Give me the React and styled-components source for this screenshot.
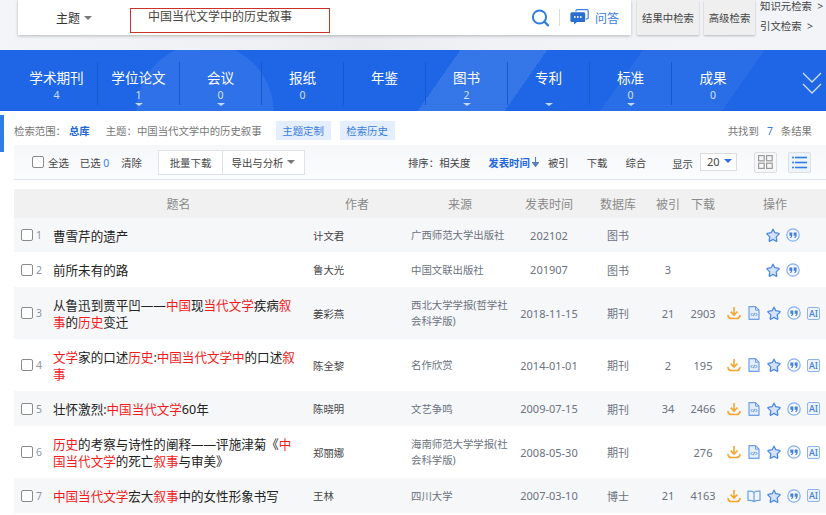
import React from "react";
import styled, { createGlobalStyle } from "styled-components";

const tabs = [
    { name: "学术期刊", count: "4" },
    { name: "学位论文", count: "1", more: true },
    { name: "会议", count: "0", more: true },
    { name: "报纸", count: "0" },
    { name: "年鉴", count: "" },
    { name: "图书", count: "2", more: true },
    { name: "专利", count: "", more: true },
    { name: "标准", count: "0", more: true },
    { name: "成果", count: "0" },
];

// title parts: strings are plain, [string] is a highlighted hit
const rows = [
    { h: 34, title: ["曹雪芹的遗产"], author: "计文君", source: "广西师范大学出版社", date: "202102", db: "图书", cited: "", down: "", icons: false },
    { h: 35, title: ["前所未有的路"], author: "鲁大光", source: "中国文联出版社", date: "201907", db: "图书", cited: "3", down: "", icons: false },
    { h: 52, title: ["从鲁迅到贾平凹——", ["中国"], "现", ["当代文学"], "疾病", ["叙"], ["事"], "的", ["历史"], "变迁"], author: "姜彩燕", source: "西北大学学报(哲学社会科学版)", date: "2018-11-15", db: "期刊", cited: "21", down: "2903", icons: "doc" },
    { h: 52, title: [["文学"], "家的口述", ["历史"], ":", ["中国当代文学中"], "的口述", ["叙"], ["事"]], author: "陈全黎", source: "名作欣赏", date: "2014-01-01", db: "期刊", cited: "2", down: "195", icons: "doc" },
    { h: 35, title: ["壮怀激烈:", ["中国当代文学"], "60年"], author: "陈晓明", source: "文艺争鸣", date: "2009-07-15", db: "期刊", cited: "34", down: "2466", icons: "doc" },
    { h: 52, title: [["历史"], "的考察与诗性的阐释——评施津菊《", ["中"], ["国当代文学"], "的死亡", ["叙事"], "与审美》"], author: "郑丽娜", source: "海南师范大学学报(社会科学版)", date: "2008-05-30", db: "期刊", cited: "", down: "276", icons: "doc" },
    { h: 35, title: [["中国当代文学"], "宏大", ["叙事"], "中的女性形象书写"], author: "王林", source: "四川大学", date: "2007-03-10", db: "博士", cited: "21", down: "4163", icons: "book" },
];

export default function App() {
    return (
        <Page>
            <GlobalStyle />
            <TopArea>
                <SearchCard>
                    <FieldSelect>
                        主题
                        <Caret $color="#777" />
                    </FieldSelect>
                    <QueryBox>中国当代文学中的历史叙事</QueryBox>
                    <SearchIcon />
                    <CardDivider />
                    <ChatIcon />
                    <AskLabel>问答</AskLabel>
                </SearchCard>
                <GreyButton $w={62} $ml={6}>结果中检索</GreyButton>
                <GreyButton $w={51} $ml={5}>高级检索</GreyButton>
                <SideLinks>
                    <span>知识元检索 &nbsp;&gt;</span>
                    <span>引文检索 &nbsp;&gt;</span>
                </SideLinks>
            </TopArea>

            <TabBand>
                {tabs.map((t, i) => (
                    <Tab key={t.name} $last={i === tabs.length - 1}>
                        <TabName>{t.name}</TabName>
                        <TabCount>{t.count}</TabCount>
                        {t.more && <TabCaret />}
                    </Tab>
                ))}
                <Chevrons />
            </TabBand>

            <SideTick />

            <ScopeRow>
                <ScopeText>检索范围：</ScopeText>
                <ScopeLib>总库</ScopeLib>
                <ScopeText>主题：中国当代文学中的历史叙事</ScopeText>
                <ScopeTag $ml={14}>主题定制</ScopeTag>
                <ScopeTag $ml={9}>检索历史</ScopeTag>
                <Found>
                    共找到<FoundNum>7</FoundNum>条结果
                </Found>
            </ScopeRow>

            <Toolbar>
                <Check $ml={18} />
                <ToolText $ml={4}>全选</ToolText>
                <ToolText $ml={11}>
                    已选 <BlueNum>0</BlueNum>
                </ToolText>
                <ToolText $ml={12}>清除</ToolText>
                <ToolButton $ml={16} $w={65}>批量下载</ToolButton>
                <ToolButton $ml={-1} $w={83}>
                    导出与分析
                    <Caret $color="#777" />
                </ToolButton>
                <ToolSpacer />
                <ToolText>排序：</ToolText>
                <ToolText>相关度</ToolText>
                <ActiveSort>
                    发表时间
                    <SortArrow />
                </ActiveSort>
                <ToolText $ml={9}>被引</ToolText>
                <ToolText $ml={18}>下载</ToolText>
                <ToolText $ml={18}>综合</ToolText>
                <ToolText $ml={26} $dy={2}>显示</ToolText>
                <PageSize>
                    20
                    <Caret $color="#2a6fdb" />
                </PageSize>
                <ViewButton $ml={17}>
                    <GridIcon />
                </ViewButton>
                <ViewButton $ml={11} $active>
                    <ListIcon />
                </ViewButton>
            </Toolbar>

            <Table>
                <HeadRow>
                    <HeadCell $span={2} $pl={30}>题名</HeadCell>
                    <HeadCell $pr={10}>作者</HeadCell>
                    <HeadCell $pr={7}>来源</HeadCell>
                    <HeadCell>发表时间</HeadCell>
                    <HeadCell>数据库</HeadCell>
                    <HeadCell>被引</HeadCell>
                    <HeadCell>下载</HeadCell>
                    <HeadCell>操作</HeadCell>
                </HeadRow>
                {rows.map((r, i) => (
                    <Row key={i} $h={r.h} $odd={i % 2 === 0}>
                        <SelectCell>
                            <Check />
                            <RowNum>{i + 1}</RowNum>
                        </SelectCell>
                        <TitleCell>
                            {r.title.map((p, j) =>
                                Array.isArray(p) ? <Hit key={j}>{p[0]}</Hit> : <span key={j}>{p}</span>
                            )}
                        </TitleCell>
                        <TextCell>{r.author}</TextCell>
                        <SourceCell>{r.source}</SourceCell>
                        <NumCell>{r.date}</NumCell>
                        <NumCell>{r.db}</NumCell>
                        <NumCell>{r.cited}</NumCell>
                        <NumCell>{r.down}</NumCell>
                        <OpsCell>
                            {r.icons ? (
                                <>
                                    <DownloadIcon />
                                    {r.icons === "doc" ? <DocIcon /> : <BookIcon />}
                                </>
                            ) : null}
                            <StarIcon />
                            <QuoteIcon />
                            {r.icons ? <AiIcon /> : <IconGap />}
                        </OpsCell>
                    </Row>
                ))}
            </Table>
        </Page>
    );
}

function SearchIcon() {
    return (
        <TopSvg width="19" height="18" viewBox="0 0 19 18" $ml={201}>
            <circle cx="8.5" cy="8" r="6.6" fill="none" stroke="#2f7de1" strokeWidth="2" />
            <path d="M13.4 12.8l3.6 3.6" stroke="#2f7de1" strokeWidth="2.2" strokeLinecap="round" />
        </TopSvg>
    );
}

function ChatIcon() {
    return (
        <TopSvg width="19" height="17" viewBox="0 0 19 17" $ml={10}>
            <path d="M6 2.5V1.6C6 1 6.5.6 7 .6h10c.6 0 1.2.5 1.2 1.1v7c0 .6-.5 1.1-1.2 1.1h-1" fill="none" stroke="#3f82e4" strokeWidth="1.2" />
            <path d="M2 3.2h11.6c.9 0 1.6.7 1.6 1.6v6.6c0 .9-.7 1.600-1.600 1.600H7l-3 2.600v-2.600H2c-.9 0-1.600-.7-1.600-1.600V4.800c0-.9.7-1.600 1.600-1.600z" fill="#2a6fd0" />
            <circle cx="4.800" cy="8" r=".9" fill="#fff" />
            <circle cx="7.800" cy="8" r=".9" fill="#fff" />
            <circle cx="10.800" cy="8" r=".9" fill="#fff" />
        </TopSvg>
    );
}

function Chevrons() {
    return (
        <ChevronSvg width="20" height="22" viewBox="0 0 20 22">
            <path d="M1 1l9 9 9-9M1 12l9 9 9-9" fill="none" stroke="#cfe0fb" strokeWidth="1.3" />
        </ChevronSvg>
    );
}

function GridIcon() {
    return (
        <svg width="15" height="14" viewBox="0 0 15 14">
            <g fill="none" stroke="#9a9a9a" strokeWidth="1.2">
                <rect x=".6" y=".6" width="5.600" height="5.200" />
                <rect x="8.600" y=".6" width="5.600" height="5.200" />
                <rect x=".6" y="8.200" width="5.600" height="5.200" />
                <rect x="8.600" y="8.200" width="5.600" height="5.200" />
            </g>
        </svg>
    );
}

function ListIcon() {
    return (
        <svg width="15" height="13" viewBox="0 0 15 13">
            <g fill="#2f7de1">
                <circle cx="1" cy="1.500" r="1" />
                <circle cx="1" cy="6.500" r="1" />
                <circle cx="1" cy="11.500" r="1" />
                <rect x="3" y=".7" width="12" height="1.600" />
                <rect x="3" y="5.700" width="12" height="1.600" />
                <rect x="3" y="10.700" width="12" height="1.600" />
            </g>
        </svg>
    );
}

function SortArrow() {
    return (
        <SortSvg width="7" height="10" viewBox="0 0 7 10">
            <path d="M3.500 0v6M.5 5.500h6L3.500 9.500z" stroke="#5a7fb5" strokeWidth="1.100" fill="#5a7fb5" />
        </SortSvg>
    );
}

function DownloadIcon() {
    return (
        <OpSvg viewBox="0 0 14 14">
            <path d="M7 1v7.500M3.600 5.600L7 9l3.400-3.400" fill="none" stroke="#f7a531" strokeWidth="1.600" />
            <path d="M1 9.500c.4 2 1.300 3 3 3h6c1.700 0 2.600-1 3-3" fill="none" stroke="#f7a531" strokeWidth="1.600" strokeLinecap="round" />
        </OpSvg>
    );
}

function DocIcon() {
    return (
        <OpSvg viewBox="0 0 14 14">
            <path d="M2 .7h6.500L12 4.200v9.100H2z" fill="#e3edfc" stroke="#6d9fe8" strokeWidth="1.200" strokeLinejoin="round" />
            <path d="M8.500.7v3.500H12" fill="none" stroke="#6d9fe8" strokeWidth="1" />
            <path d="M5.400 7L4 8.500 5.400 10M8.600 7L10 8.500 8.600 10M7.500 6.800L6.500 10.200" fill="none" stroke="#4c87e0" strokeWidth=".9" />
        </OpSvg>
    );
}

function BookIcon() {
    return (
        <OpSvg viewBox="0 0 14 14">
            <path d="M7 3.400C5.800 2.400 3.500 2 1 2.200v9.300c2.500-.2 4.800.2 6 1.200 1.200-1 3.500-1.400 6-1.200V2.200C10.500 2 8.200 2.400 7 3.400zM7 3.400v9.300" fill="#f1f6fe" stroke="#6d9fe8" strokeWidth="1.200" strokeLinejoin="round" />
        </OpSvg>
    );
}

function StarIcon() {
    return (
        <OpSvg viewBox="0 0 14 14">
            <path d="M7 1.200l1.800 3.500 3.900.6c.4.1.5.5.3.8L10.200 8.900l.6 3.800c.1.400-.3.600-.6.500L7 11.400l-3.200 1.800c-.3.100-.7-.1-.6-.5l.6-3.800L1 6.100c-.2-.3-.1-.7.3-.8l3.900-.6z" fill="#d5e3f8" stroke="#4c87e0" strokeWidth="1.300" strokeLinejoin="round" />
        </OpSvg>
    );
}

function QuoteIcon() {
    return (
        <OpSvg viewBox="0 0 14 14">
            <circle cx="7" cy="7" r="6.200" fill="#f4f8fe" stroke="#86b0ee" strokeWidth="1.200" />
            <path d="M3.400 4.400h2.900v3c0 1.300-.8 2.200-2 2.600l-.4-.8c.7-.3 1.100-.8 1.100-1.500H3.400zM7.700 4.400h2.900v3c0 1.300-.8 2.200-2 2.600l-.4-.8c.7-.3 1.100-.8 1.100-1.500H7.700z" fill="#3f7fdd" />
        </OpSvg>
    );
}

function AiIcon() {
    return <AiBadge>AI</AiBadge>;
}

const GlobalStyle = createGlobalStyle`
    html, body {
        margin: 0;
        padding: 0;
        background: #fff;
    }
    body {
        font-family: "Noto Sans", "Noto Sans CJK SC", sans-serif;
        color: #333;
    }
`;

const Page = styled.div`
    position: relative;
    width: 826px;
    height: 515px;
    overflow: hidden;
    background: #fff;
`;

const TopArea = styled.div`
    display: flex;
    align-items: flex-start;
    height: 50px;
    padding-left: 18px;
    box-sizing: border-box;
    background: linear-gradient(115deg, #f4f5f8 0%, #eef0f3 35%, #e9ebee 45%, #f1f2f5 60%, #f2f4f8 100%);
`;

const SearchCard = styled.div`
    display: flex;
    align-items: center;
    width: 613px;
    height: 35px;
    background: #fff;
    box-shadow: 0 1px 3px rgba(0, 0, 0, 0.25);
`;

const FieldSelect = styled.div`
    display: flex;
    align-items: center;
    width: 112px;
    padding-left: 38px;
    box-sizing: border-box;
    font-size: 12px;
    color: #333;
`;

const Caret = styled.i`
    display: inline-block;
    width: 0;
    height: 0;
    margin-left: 4px;
    border-left: 4px solid transparent;
    border-right: 4px solid transparent;
    border-top: 4px solid ${(p) => p.$color};
`;

const QueryBox = styled.div`
    width: 200px;
    height: 25px;
    margin-top: 6px;
    padding: 0 0 6px 17px;
    box-sizing: border-box;
    border: 1px solid #c8342c;
    font-size: 12px;
    line-height: 15px;
    color: #444;
`;

const TopSvg = styled.svg`
    flex: none;
    margin-left: ${(p) => p.$ml}px;
`;

const CardDivider = styled.div`
    width: 1px;
    height: 17px;
    margin-left: 9px;
    background: #dcdcdc;
`;

const AskLabel = styled.span`
    margin-left: 6px;
    font-size: 12px;
    color: #3b7de8;
`;

const GreyButton = styled.div`
    display: flex;
    align-items: center;
    justify-content: center;
    width: ${(p) => p.$w}px;
    height: 35px;
    margin-left: ${(p) => p.$ml}px;
    background: #efefef;
    box-shadow: 0 1px 2px rgba(0, 0, 0, 0.25);
    font-size: 10.400px;
    color: #444;
    white-space: nowrap;
`;

const SideLinks = styled.div`
    display: flex;
    flex-direction: column;
    gap: 5px;
    margin-left: 5px;
    margin-top: -1px;
    font-size: 10.400px;
    line-height: 15px;
    color: #444;
    white-space: nowrap;
`;

const TabBand = styled.div`
    position: relative;
    display: flex;
    height: 61px;
    padding-left: 16px;
    background:
        radial-gradient(circle at 205px 62px, rgba(255, 255, 255, 0.07) 0 68px, transparent 69px),
        linear-gradient(125deg, transparent 0 53%, rgba(255, 255, 255, 0.1) 53% 63%, transparent 63%),
        linear-gradient(125deg, transparent 0 74%, rgba(255, 255, 255, 0.05) 74% 88%, transparent 88%),
        #1e66e6;
`;

const Tab = styled.div`
    position: relative;
    display: flex;
    flex-direction: column;
    align-items: center;
    width: 82px;
    height: 43px;
    margin-top: 12px;
    box-sizing: border-box;
    color: #fff;
    border-right: ${(p) => (p.$last ? "none" : "1px solid #1658cf")};
`;

const TabName = styled.div`
    margin-top: 6px;
    font-size: 13.600px;
    line-height: 20px;
`;

const TabCount = styled.div`
    height: 14px;
    font-size: 10.500px;
    line-height: 14px;
    color: rgba(255, 255, 255, 0.8);
`;

const TabCaret = styled.i`
    position: absolute;
    left: 50%;
    bottom: -1px;
    margin-left: -4px;
    width: 0;
    height: 0;
    border-left: 4px solid transparent;
    border-right: 4px solid transparent;
    border-top: 3px solid #c6d9fa;
`;

const ChevronSvg = styled.svg`
    position: absolute;
    left: 802px;
    top: 22px;
`;

const SideTick = styled.div`
    position: absolute;
    left: 0;
    top: 115px;
    width: 4px;
    height: 37px;
    background: #2f7de8;
`;

const ScopeRow = styled.div`
    display: flex;
    align-items: center;
    height: 34px;
    padding: 5px 14px 0;
    box-sizing: border-box;
    font-size: 10.400px;
    color: #777;
`;

const ScopeText = styled.span`
    white-space: nowrap;
`;

const ScopeLib = styled.b`
    margin: 0 16px 0 3px;
    font-weight: 700;
    color: #2468d8;
`;

const ScopeTag = styled.span`
    display: flex;
    align-items: center;
    justify-content: center;
    width: 55px;
    height: 19px;
    margin-left: ${(p) => p.$ml}px;
    background: #e4eefc;
    color: #3b7de0;
`;

const Found = styled.span`
    margin-left: auto;
    color: #777;
`;

const FoundNum = styled.span`
    margin: 0 8px;
    color: #3b7de0;
`;

const Toolbar = styled.div`
    display: flex;
    align-items: center;
    height: 35px;
    margin-left: 14px;
    box-sizing: border-box;
    border-bottom: 1px solid #dbe2ec;
    background: linear-gradient(180deg, #f6f7f9 0%, #fbfcfd 100%);
    font-size: 10.400px;
    color: #444;
`;

const Check = styled.i`
    flex: none;
    width: 12px;
    height: 12px;
    margin-left: ${(p) => p.$ml || 0}px;
    box-sizing: border-box;
    border: 1px solid #8a8a8a;
    border-radius: 2px;
    background: #fff;
`;

const ToolText = styled.span`
    margin-left: ${(p) => p.$ml || 0}px;
    padding-top: ${(p) => p.$dy || 0}px;
    white-space: nowrap;
`;

const BlueNum = styled.span`
    color: #3b7de0;
`;

const ToolButton = styled.div`
    display: flex;
    align-items: center;
    justify-content: center;
    width: ${(p) => p.$w}px;
    height: 25px;
    margin-left: ${(p) => p.$ml}px;
    box-sizing: border-box;
    border: 1px solid #dfe3e8;
    background: #fff;
    color: #444;
`;

const ToolSpacer = styled.div`
    flex: 1;
`;

const ActiveSort = styled.span`
    display: flex;
    align-items: center;
    margin-left: 18px;
    font-weight: 700;
    color: #2468d8;
    white-space: nowrap;
`;

const SortSvg = styled.svg`
    margin-left: 2px;
`;

const PageSize = styled.div`
    display: flex;
    align-items: center;
    justify-content: space-between;
    width: 37px;
    height: 18px;
    margin-left: 7px;
    padding: 0 4px 2px 6px;
    box-sizing: border-box;
    border: 1px solid #dcdcdc;
    background: #fff;
    font-size: 11px;
`;

const ViewButton = styled.div`
    display: flex;
    align-items: center;
    justify-content: center;
    width: 23px;
    height: 21px;
    margin-left: ${(p) => p.$ml}px;
    box-sizing: border-box;
    border: 1px solid #dcdfe4;
    border-radius: 2px;
    background: ${(p) => (p.$active ? "#eef4fd" : "#f7f7f7")};
    &:last-child {
        margin-right: 15px;
    }
`;

const Table = styled.div`
    margin: 9px 0 0 14px;
`;

const gridCols = "39px 260px 98px 105px 66px 72px 28px 42px 102px";

const HeadRow = styled.div`
    display: grid;
    grid-template-columns: ${gridCols};
    align-items: center;
    height: 29px;
    background: #f1f1f1;
    font-size: 12px;
    color: #8a8a8a;
`;

const HeadCell = styled.div`
    grid-column: span ${(p) => p.$span || 1};
    padding-left: ${(p) => p.$pl || 0}px;
    padding-right: ${(p) => p.$pr || 0}px;
    text-align: center;
    white-space: nowrap;
`;

const Row = styled.div`
    display: grid;
    grid-template-columns: ${gridCols};
    align-items: center;
    height: ${(p) => p.$h}px;
    background: ${(p) => (p.$odd ? "#f6f7f9" : "#fff")};
`;

const SelectCell = styled.div`
    display: flex;
    align-items: center;
    padding-left: 7px;
`;

const RowNum = styled.span`
    margin-left: 3px;
    font-size: 10.500px;
    color: #8c94a3;
`;

const TitleCell = styled.div`
    width: 243px;
    padding-top: 2px;
    font-size: 12.550px;
    line-height: 17px;
    color: #222;
`;

const Hit = styled.span`
    color: #f01c1c;
`;

const TextCell = styled.div`
    font-size: 10.400px;
    color: #444;
`;

const SourceCell = styled.div`
    width: 98px;
    font-size: 10.400px;
    line-height: 16px;
    color: #6b7280;
`;

const NumCell = styled.div`
    font-size: 11px;
    color: #6b7280;
    text-align: center;
    white-space: nowrap;
`;

const OpsCell = styled.div`
    display: flex;
    align-items: center;
    justify-content: flex-end;
    gap: 6px;
    padding-right: 6px;
`;

const OpSvg = styled.svg`
    flex: none;
    width: 14px;
    height: 14px;
`;

const IconGap = styled.i`
    width: 14px;
`;

const AiBadge = styled.span`
    flex: none;
    display: flex;
    align-items: center;
    justify-content: center;
    width: 13px;
    height: 13px;
    border: 1px solid #8db4ee;
    border-radius: 2px;
    box-sizing: border-box;
    background: #eef4fd;
    font-size: 9px;
    font-weight: 500;
    color: #3f7fdd;
`;
